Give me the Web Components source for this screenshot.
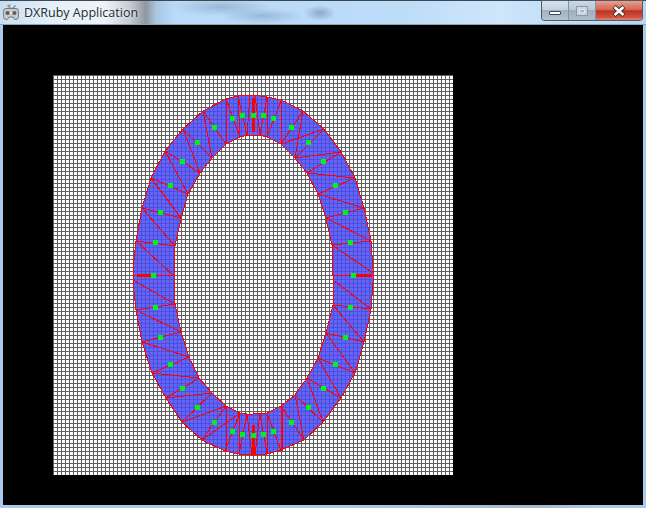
<!DOCTYPE html>
<html>
<head>
<meta charset="utf-8">
<title>DXRuby Application</title>
<style>
  html, body { margin: 0; padding: 0; background: #000; }
</style>
</head>
<body>
<app-window label="DXRuby Application"><mesh-canvas></mesh-canvas></app-window>

<script>
// screenshot coordinates, the mesh svg uses a viewBox that starts at the grid corner
const OUTER = [[253,95],[267,97],[281,100],[303,111],[324,129],[341,152],[355,178],[364,208],[371,241],[373,269],[373,282],[371,309],[364,342],[355,373],[341,398],[323,422],[304,440],[281,450],[267,454],[255,455],[252,455],[239,454],[225,451],[202,440],[182,422],[166,398],[152,373],[142,342],[136,310],[133,282],[133,269],[136,241],[142,208],[151,178],[165,151],[183,129],[203,111],[226,99],[238,96],[250,95]];
const INNER = [[253,135],[260,135],[267,137],[281,144],[295,158],[307,173],[318,194],[326,218],[332,245],[333,276],[333,305],[326,333],[318,358],[307,378],[295,395],[281,406],[267,413],[260,413],[253,414],[247,414],[240,413],[226,406],[212,393],[199,378],[189,357],[181,332],[175,304],[174,276],[175,246],[181,218],[188,194],[200,173],[212,158],[226,144],[240,137],[247,135]];

const EDGES = [
  // top right
  [281,101,281,144],[303,111,281,144],[303,111,295,158],[324,129,281,144],[324,129,295,158],
  [341,152,295,158],[341,152,307,173],[307,173,355,178],[318,194,355,178],[318,194,364,208],
  [326,218,364,208],[326,218,371,241],[332,245,371,241],[332,245,373,273],[333,276,373,275],
  // bottom right
  [333,280,371,309],[333,305,371,309],[333,305,364,342],[326,333,364,342],[326,333,355,373],
  [318,358,355,373],[318,358,341,398],[307,378,341,398],[307,378,323,422],[295,395,323,422],
  [295,395,304,440],[281,406,304,440],[281,406,281,451],[282,406,282,451],[267,413,281,451],[267,413,267,454],
  [260,413,267,454],[260,413,255,455],
  // bottom left
  [247,414,252,455],[247,414,239,454],[240,413,239,454],[240,413,225,451],[226,406,226,451],
  [202,440,226,406],[202,440,240,413],[182,422,226,406],[182,422,212,393],[166,398,212,393],
  [166,398,199,378],[152,373,199,378],[152,373,189,357],[142,342,189,357],[142,342,181,332],
  [136,310,181,332],[136,310,175,304],[133,280,175,304],[133,275,174,276],
  // top left
  [136,241,174,276],[136,241,175,246],[142,208,175,246],[142,208,181,218],[151,178,181,218],
  [151,178,188,194],[165,151,188,194],[165,151,200,173],[183,129,200,173],[183,129,212,158],
  [203,111,212,158],[203,111,226,144],[226,99,226,144],[226,99,240,137],[238,96,240,137],
  [238,96,247,135],[250,95,247,135],[255,95,260,135],[267,97,260,135],[267,97,267,137],[281,101,267,137]
];

const THICK = [[253,98,253,132],[253,425,253,455],[137,275,151,275],[356,275,372,275]];

const DOTS = [[253,115],[242,115],[263,115],[232,118],[273,118],[214,127],[291,127],[197,142],[308,142],[182,161],[323,161],[170,185],[335,185],[160,212],[345,212],[155,242],[350,242],[153,275],[353,275],[155,307],[350,307],[160,337],[345,337],[170,364],[335,364],[182,388],[323,388],[197,407],[308,407],[214,422],[291,422],[232,431],[273,431],[242,434],[263,434],[253,435]];

const toPath = pts => 'M' + pts.map(p => p.join(' ')).join('L') + 'Z';

class MeshCanvas extends HTMLElement {
  constructor() {
    super();
    this.attachShadow({ mode: 'open' });
  }

  connectedCallback() {
    const edges = EDGES.map(e => `<line x1="${e[0]}" y1="${e[1]}" x2="${e[2]}" y2="${e[3]}"/>`).join('');
    const thick = THICK.map(e => `<line x1="${e[0]}" y1="${e[1]}" x2="${e[2]}" y2="${e[3]}"/>`).join('');
    const dots = DOTS.map(d => `<rect x="${d[0] - 2}" y="${d[1] - 2}" width="5" height="5"/>`).join('');

    this.shadowRoot.innerHTML = `
      <style>
        :host { display: block; width: 400px; height: 400px; }
        svg { display: block; }
        .fill { fill: #4b4bf5; fill-opacity: .85; fill-rule: evenodd; }
        .wire { fill: none; stroke: #f00; stroke-width: 1; }
        .thick { stroke: #f00; stroke-width: 3; }
        .dots { fill: #00f020; }
      </style>
      <svg width="400" height="400" viewBox="53 75 400 400" shape-rendering="crispEdges">
        <defs>
          <pattern id="cell" x="53" y="75" width="4" height="4" patternUnits="userSpaceOnUse">
            <rect width="4" height="4" fill="#fff"/>
            <rect width="4" height="1" fill="#606060"/>
            <rect width="1" height="4" fill="#606060"/>
          </pattern>
        </defs>
        <rect x="53" y="75" width="400" height="400" fill="url(#cell)"/>
        <path class="fill" d="${toPath(OUTER)}${toPath(INNER)}"/>
        <g class="wire">
          <path d="${toPath(OUTER)}"/>
          <path d="${toPath(INNER)}"/>
          ${edges}
        </g>
        <g class="thick">${thick}</g>
        <g class="dots">${dots}</g>
      </svg>
    `;
  }
}

class WindowControls extends HTMLElement {
  constructor() {
    super();
    this.attachShadow({ mode: 'open' });
    this.shadowRoot.innerHTML = `
      <style>
        :host { display: flex; height: 20px; margin-right: 3px; box-sizing: border-box; border: 1px solid #4d5a68; border-top: none; border-radius: 0 0 4px 4px; overflow: hidden; box-shadow: 0 0 1px #fff; }
        div { display: flex; align-items: center; justify-content: center; box-sizing: border-box; height: 100%; }
        .min, .max { width: 27px; border-right: 1px solid #8493a3; background: linear-gradient(#d6e3ef 0, #c4d2df 45%, #a3b2c0 50%, #b4c3d0 100%); }
        .max { background: linear-gradient(#cbd9e6 0, #bac9d6 45%, #a1b0be 50%, #aebdca 100%); }
        .close { width: 46px; background: linear-gradient(#e7a193 0, #d66552 45%, #bf3120 52%, #d0523f 85%, #e08a78 100%); }
        .bar { width: 12px; height: 4px; box-sizing: border-box; margin-top: 4px; background: #fff; border: 1px solid #3f4a56; border-radius: 1px; }
        .box { width: 12px; height: 10px; box-sizing: border-box; border: 1px solid #8b99a6; background: #c9d5df; display: flex; }
        .box i { flex: 1; margin: 2px; background: #a9b6c2; border: 1px solid #dde5ec; }
      </style>
      <div class="min"><span class="bar"></span></div>
      <div class="max"><span class="box"><i></i></span></div>
      <div class="close">
        <svg width="14" height="12" viewBox="0 0 14 12">
          <path d="M2 1.5L12 10.5M12 1.5L2 10.5" stroke="#4a2a28" stroke-width="4.4" fill="none"/>
          <path d="M2.5 2L11.5 10M11.5 2L2.5 10" stroke="#fff" stroke-width="2.6" fill="none"/>
        </svg>
      </div>
    `;
  }
}

class TitleBar extends HTMLElement {
  constructor() {
    super();
    this.attachShadow({ mode: 'open' });
    this.shadowRoot.innerHTML = `
      <style>
        :host {
          display: flex; align-items: flex-start; height: 25px; box-sizing: border-box;
          border-top: 1px solid #3c4854; border-bottom: 1px solid #8ea4b8;
          background:
            radial-gradient(ellipse 50px 9px at 222px 6px, rgba(130,160,195,.6), transparent),
            radial-gradient(ellipse 42px 8px at 262px 15px, rgba(120,150,185,.5), transparent),
            radial-gradient(ellipse 16px 8px at 320px 12px, rgba(90,120,150,.5), transparent),
            linear-gradient(90deg, #c6def2 0, #e3eff9 50px, #eef3f7 105px, #c6ccd2 130px, #8f979e 146px, #a9c6e0 156px, #b9dbf8 175px, #bcdcf8 400px, #cfe6fb 500px, #c5e0f8 540px, #b6d6f2 100%);
        }
        .icon { margin: 3px 0 0 3px; flex: none; }
        .label {
          margin: 1px 0 0 5px; flex: 1;
          font: 12.5px/22px "Open Sans", "Noto Sans", sans-serif;
          color: #222a33; white-space: nowrap;
          text-shadow: 0 0 3px rgba(255,255,255,.9);
        }
      </style>
      <svg class="icon" width="16" height="16" viewBox="0 0 16 16">
        <path d="M8 4.5L5 2L7.5 .8M9.5 4.5L12.5 1.5" stroke="#8d8d8d" stroke-width="1.4" fill="none"/>
        <path d="M3 4.5H13Q15.6 4.5 15.6 7.5V12.5Q15.6 15.4 13 15.4H11.5L10 13H6L4.5 15.4H3Q.4 15.4 .4 12.5V7.5Q.4 4.5 3 4.5Z" fill="#c9c9c9" stroke="#777"/>
        <circle cx="4.6" cy="9" r="2.1" fill="#5f5f5f"/>
        <circle cx="11.4" cy="9" r="2.1" fill="#5f5f5f"/>
        <rect x="7" y="8" width="2" height="2" fill="#eee"/>
      </svg>
      <span class="label"><slot></slot></span>
      <window-controls></window-controls>
    `;
  }
}

class AppWindow extends HTMLElement {
  constructor() {
    super();
    this.attachShadow({ mode: 'open' });
    this.shadowRoot.innerHTML = `
      <style>
        :host {
          display: flex; flex-direction: column; width: 646px; height: 508px; overflow: hidden;
          background: linear-gradient(90deg, #a9cbe9 0, #a9cbe9 320px, #a9b9c6 540px, #a9cbe9 600px);
        }
        .client {
          width: 640px; height: 480px; margin: 0 3px; box-sizing: border-box;
          padding: 50px; background: #000;
        }
      </style>
      <title-bar></title-bar>
      <div class="client"><slot></slot></div>
    `;
  }

  connectedCallback() {
    this.shadowRoot.querySelector('title-bar').textContent = this.getAttribute('label');
  }
}

customElements.define('mesh-canvas', MeshCanvas);
customElements.define('window-controls', WindowControls);
customElements.define('title-bar', TitleBar);
customElements.define('app-window', AppWindow);
</script>
</body>
</html>
